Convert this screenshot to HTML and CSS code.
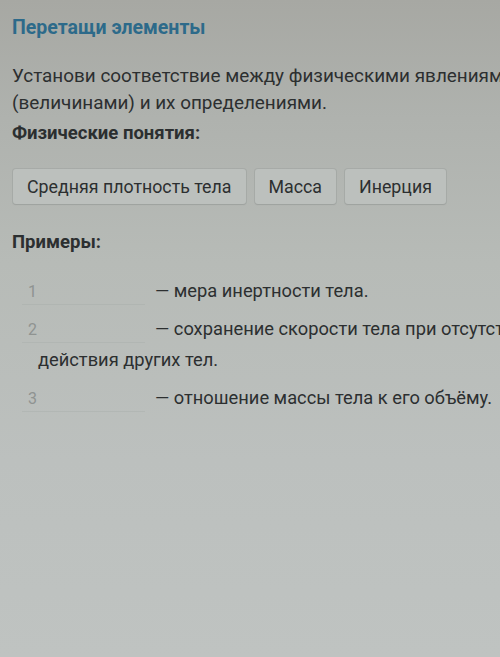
FILE: index.html
```html
<!DOCTYPE html>
<html lang="ru">
<head>
<meta charset="utf-8">
<link rel="stylesheet" href="styles.css">
</head>
<body>
<div class="page">
  <h1 class="title">Перетащи элементы</h1>
  <p class="task">Установи соответствие между физическими явлениями (величинами) и их определениями.</p>
  <h2 class="label">Физические понятия:</h2>
  <div class="chips">
    <span class="chip">Средняя плотность тела</span>
    <span class="chip">Масса</span>
    <span class="chip">Инерция</span>
  </div>
  <h2 class="label examples">Примеры:</h2>
  <div class="rows">
    <div class="row"><span class="slot">1</span>— мера инертности тела.</div>
    <div class="row"><span class="slot">2</span>— сохранение скорости тела при отсутствии действия других тел.</div>
    <div class="row"><span class="slot">3</span>— отношение массы тела к его объёму.</div>
  </div>
</div>
</body>
</html>
```
FILE: styles.css
```css
html, body {
  margin: 0;
  padding: 0;
  height: 100%;
  overflow: hidden;
}
body {
  background: linear-gradient(180deg, #a7a8a3 0%, #afb2ae 18%, #b7bbb7 40%, #bcc0be 70%, #bfc3c1 100%);
  font-family: Roboto, "Noto Sans", sans-serif;
  color: #2c2f30;
}
.page {
  width: 560px;
  padding: 16px 0 0 12px;
  box-sizing: border-box;
}
.title {
  margin: 0;
  font-size: 19.5px;
  font-weight: 700;
  color: #2d6a8a;
  line-height: 24px;
}
.task {
  margin: 22px 0 0 0;
  font-size: 18.9px;
  line-height: 27px;
  width: 520px;
}
.label {
  margin: 5px 0 0 0;
  font-size: 18.5px;
  font-weight: 700;
  line-height: 24px;
}
.chips {
  display: flex;
  gap: 9px;
  margin-top: 24px;
  margin-left: 1px;
}
.chip {
  display: inline-block;
  padding: 0 14px;
  height: 35px;
  line-height: 35px;
  font-size: 17.8px;
  background: #bcc0bd;
  border-radius: 3px;
  box-shadow: 0 0 0 1px rgba(150,155,152,0.4), 0 1px 1px rgba(120,125,122,0.25);
}
.examples {
  margin-top: 26px;
}
.rows {
  margin-top: 21px;
  padding-left: 26px;
}
.row {
  font-size: 18.3px;
  line-height: 31px;
  text-indent: -16px;
  margin-bottom: 7px;
}
.slot {
  display: inline-block;
  text-indent: 0;
  width: 123px;
  margin-right: 10px;
  padding-left: 6px;
  box-sizing: border-box;
  font-size: 16px;
  color: #8f9391;
  border-bottom: 1px solid rgba(160,165,162,0.3);
  line-height: 24px;
}
```
